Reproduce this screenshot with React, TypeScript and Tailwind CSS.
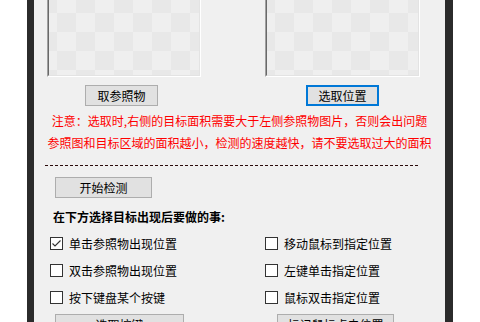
import type React from "react";

const font = "font-['Microsoft_YaHei','Noto_Sans_CJK_SC',sans-serif]";

const WinButton = ({
  children,
  className = "",
  focused = false,
}: {
  children: React.ReactNode;
  className?: string;
  focused?: boolean;
}) => (
  <div
    className={`flex h-[21px] shrink-0 items-center justify-center bg-[#e1e1e1] text-[12px] leading-none text-black ${
      focused ? "border-2 border-[#0078d7]" : "border border-[#adadad]"
    } ${className}`}
  >
    {children}
  </div>
);

const PictureBox = ({ className = "" }: { className?: string }) => (
  <div className={`h-[77px] shrink-0 border-b border-l border-r border-b-white border-l-[#a0a0a0] border-r-white ${className}`}>
    <div className="h-full w-full border-b border-l border-r border-b-[#e3e3e3] border-l-[#696969] border-r-[#e3e3e3] bg-[repeating-conic-gradient(#e8e8e8_0%_25%,#efefef_0%_50%)] bg-[length:38px_38px] bg-[position:8px_-6px]" />
  </div>
);

const Check = ({ label, checked = false }: { label: string; checked?: boolean }) => (
  <div className="flex h-[13px] items-center gap-[6px]">
    <div className="flex h-[13px] w-[13px] shrink-0 items-center justify-center border border-[#333] bg-white">
      {checked && (
        <svg width="11" height="11" viewBox="0 0 11 11">
          <polyline points="1.5,5.5 4,8 9.5,2.5" fill="none" stroke="#333" strokeWidth="1.1" />
        </svg>
      )}
    </div>
    <span className="whitespace-nowrap text-[12px] leading-none text-black">{label}</span>
  </div>
);

export default function App() {
  return (
    <div className={`flex h-[322px] w-[480px] overflow-hidden bg-white ${font}`}>
      <div className="w-[27px] shrink-0 bg-white" />
      <div className="w-[7px] shrink-0 bg-[#2b2b2b]" />

      <div className="flex w-[411px] shrink-0 flex-col bg-[#f0f0f0]">
        {/* picture boxes */}
        <div className="flex">
          <PictureBox className="ml-[13px] w-[154px]" />
          <PictureBox className="ml-[64px] w-[155px]" />
        </div>

        <div className="mt-[8px] flex">
          <WinButton className="ml-[51px] w-[73px]">取参照物</WinButton>
          <WinButton focused className="ml-[148px] w-[73px]">选取位置</WinButton>
        </div>

        <div className="mt-[4px] flex flex-col items-center text-[12px] leading-[22px] text-[#ff0000]">
          <p className="whitespace-nowrap">注意：选取时,右侧的目标面积需要大于左侧参照物图片，否则会出问题</p>
          <p className="whitespace-nowrap">参照图和目标区域的面积越小，检测的速度越快，请不要选取过大的面积</p>
        </div>

        <div className="ml-[11px] mt-[11px] w-[373px] border-t border-dashed border-[#2a0a0a]" />

        <WinButton className="ml-[21px] mt-[11px] w-[97px]">开始检测</WinButton>

        <p className="ml-[19px] mt-[13px] whitespace-nowrap text-[12px] font-bold leading-none text-black">
          在下方选择目标出现后要做的事:
        </p>

        <div className="mt-[14px] grid grid-cols-[215px_1fr] gap-y-[14px] pl-[16px]">
          <Check label="单击参照物出现位置" checked />
          <Check label="移动鼠标到指定位置" />
          <Check label="双击参照物出现位置" />
          <Check label="左键单击指定位置" />
          <Check label="按下键盘某个按键" />
          <Check label="鼠标双击指定位置" />
        </div>

        <div className="mt-[10px] flex">
          <WinButton className="ml-[21px] w-[129px]">选取按键</WinButton>
          <WinButton className="ml-[93px] w-[117px]">标记鼠标点击位置</WinButton>
        </div>
      </div>

      <div className="w-[8px] shrink-0 bg-[#2b2b2b]" />
      <div className="flex-1 bg-white" />
    </div>
  );
}
